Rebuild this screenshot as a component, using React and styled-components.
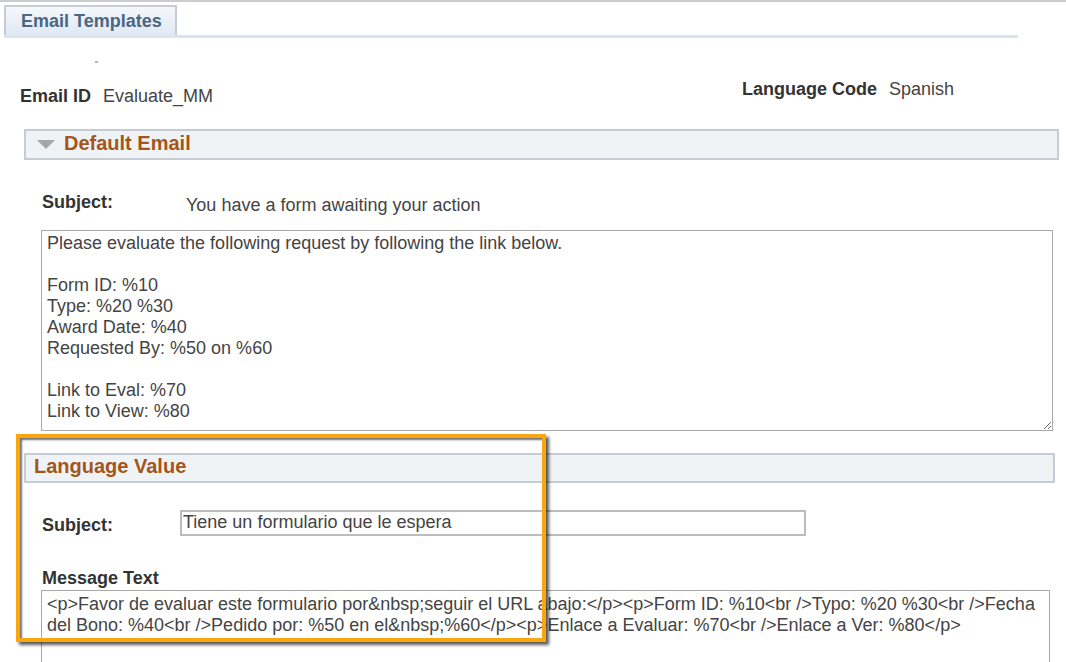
import React from "react";
import styled, { createGlobalStyle } from "styled-components";

const GlobalStyle = createGlobalStyle`
  html, body {
    margin: 0;
    padding: 0;
    overflow: hidden;
    background: #ffffff;
  }
  body {
    font-family: "Liberation Sans", Arial, sans-serif;
    font-size: 18px;
    color: #333333;
  }
`;

const Page = styled.div`
  position: relative;
  width: 1066px;
  height: 662px;
`;

const TopRule = styled.div`
  height: 2px;
  background: #c9cdd1;
`;

const TabStrip = styled.div`
  display: flex;
  margin-top: 3px;
  padding-left: 4px;
`;

const Tab = styled.div`
  box-sizing: border-box;
  width: 173px;
  height: 30px;
  padding-left: 15px;
  border: 2px solid #c5ccd4;
  border-bottom: none;
  background: linear-gradient(#f6f8fb, #dfe8f2);
  color: #4a6685;
  font-weight: bold;
  font-size: 18px;
  line-height: 28px;
`;

const TabLine = styled.div`
  width: 1014px;
  height: 3px;
  margin-left: 4px;
  background: #dbe4ef;
`;

const Dot = styled.div`
  width: 3px;
  height: 2px;
  margin: 23px 0 0 95px;
  background: #b4b4b4;
`;

const InfoRow = styled.div`
  display: grid;
  grid-template-columns: 722px auto;
  margin-top: 16px;
  padding-left: 20px;
`;

const Field = styled.div`
  display: flex;
  gap: 12px;
  margin-top: ${(p) => p.$drop || 0}px;
  line-height: 21px;
`;

const Label = styled.span`
  font-weight: bold;
  color: #333333;
`;

const Value = styled.span`
  color: #444444;
`;

const SectionHeader = styled.div`
  box-sizing: border-box;
  display: flex;
  align-items: center;
  width: ${(p) => p.$width}px;
  height: ${(p) => p.$height}px;
  margin: ${(p) => p.$top}px 0 0 24px;
  padding: 0 0 3px ${(p) => p.$pad}px;
  border: 2px solid #c6ccd3;
  background: #eff3f5;
`;

const Triangle = styled.span`
  width: 0;
  height: 0;
  margin: 3px 9px 0 0;
  border-left: 9px solid transparent;
  border-right: 9px solid transparent;
  border-top: 9px solid #a6a6a6;
`;

const SectionTitle = styled.span`
  color: #a5541b;
  font-weight: bold;
  font-size: 20px;
`;

const FormRow = styled.div`
  display: flex;
  align-items: ${(p) => (p.$center ? "center" : "flex-start")};
  height: ${(p) => p.$height}px;
  margin: ${(p) => p.$top}px 0 0 42px;
  line-height: 21px;
`;

const RowLabel = styled.span`
  flex: 0 0 ${(p) => p.$width}px;
  padding-top: ${(p) => p.$nudge || 0}px;
  font-weight: bold;
  color: #333333;
`;

const RowValue = styled.span`
  padding-top: 3px;
  color: #444444;
`;

const TextBox = styled.input`
  box-sizing: border-box;
  width: 626px;
  height: 26px;
  padding: 0 1px 2px;
  border: 2px solid #bcbcbc;
  font-family: "Liberation Sans", Arial, sans-serif;
  font-size: 18px;
  color: #444444;
  outline: none;
`;

const FieldHeading = styled.div`
  margin: 32px 0 0 42px;
  font-weight: bold;
  line-height: 21px;
  color: #333333;
`;

const MessageArea = styled.textarea`
  display: block;
  box-sizing: border-box;
  width: ${(p) => p.$width}px;
  height: ${(p) => p.$height}px;
  margin: ${(p) => p.$top}px 0 0 41px;
  padding: ${(p) => p.$padTop}px 5px 0;
  border: 1px solid #a9a9a9;
  font-family: "Liberation Sans", Arial, sans-serif;
  font-size: 18px;
  line-height: 21px;
  color: #444444;
  overflow: hidden;
  outline: none;
`;

const Highlight = styled.div`
  position: absolute;
  left: 16px;
  top: 434px;
  box-sizing: border-box;
  width: 530px;
  height: 208px;
  border: 4px solid #fba60f;
  box-shadow: 3px 3px 3px rgba(0, 0, 0, 0.65),
    inset 2px 2px 2px rgba(0, 0, 0, 0.55);
  pointer-events: none;
`;

const defaultBody = `Please evaluate the following request by following the link below.

Form ID: %10
Type: %20 %30
Award Date: %40
Requested By: %50 on %60

Link to Eval: %70
Link to View: %80`;

const spanishBody =
  "<p>Favor de evaluar este formulario por&nbsp;seguir el URL abajo:</p><p>Form ID: %10<br />Typo: %20 %30<br />Fecha del Bono: %40<br />Pedido por: %50 en el&nbsp;%60</p><p>Enlace a Evaluar: %70<br />Enlace a Ver: %80</p>";

const App = () => {
  return (
    <Page>
      <GlobalStyle />
      <TopRule />
      <TabStrip>
        <Tab>Email Templates</Tab>
      </TabStrip>
      <TabLine />
      <Dot />

      <InfoRow>
        <Field $drop={7}>
          <Label>Email ID</Label>
          <Value>Evaluate_MM</Value>
        </Field>
        <Field>
          <Label>Language Code</Label>
          <Value>Spanish</Value>
        </Field>
      </InfoRow>

      <SectionHeader $width={1035} $height={31} $top={22} $pad={11}>
        <Triangle />
        <SectionTitle>Default Email</SectionTitle>
      </SectionHeader>

      <FormRow $height={23} $top={32}>
        <RowLabel $width={144}>Subject:</RowLabel>
        <RowValue>You have a form awaiting your action</RowValue>
      </FormRow>
      <MessageArea
        readOnly
        $width={1012}
        $height={201}
        $top={15}
        $padTop={2}
        defaultValue={defaultBody}
      />

      <SectionHeader $width={1031} $height={30} $top={22} $pad={8}>
        <SectionTitle>Language Value</SectionTitle>
      </SectionHeader>

      <FormRow $center $height={26} $top={27}>
        <RowLabel $width={138} $nudge={4}>
          Subject:
        </RowLabel>
        <TextBox readOnly defaultValue="Tiene un formulario que le espera" />
      </FormRow>

      <FieldHeading>Message Text</FieldHeading>
      <MessageArea
        readOnly
        $width={1009}
        $height={110}
        $top={1}
        $padTop={3}
        defaultValue={spanishBody}
      />

      <Highlight />
    </Page>
  );
};

export default App;
